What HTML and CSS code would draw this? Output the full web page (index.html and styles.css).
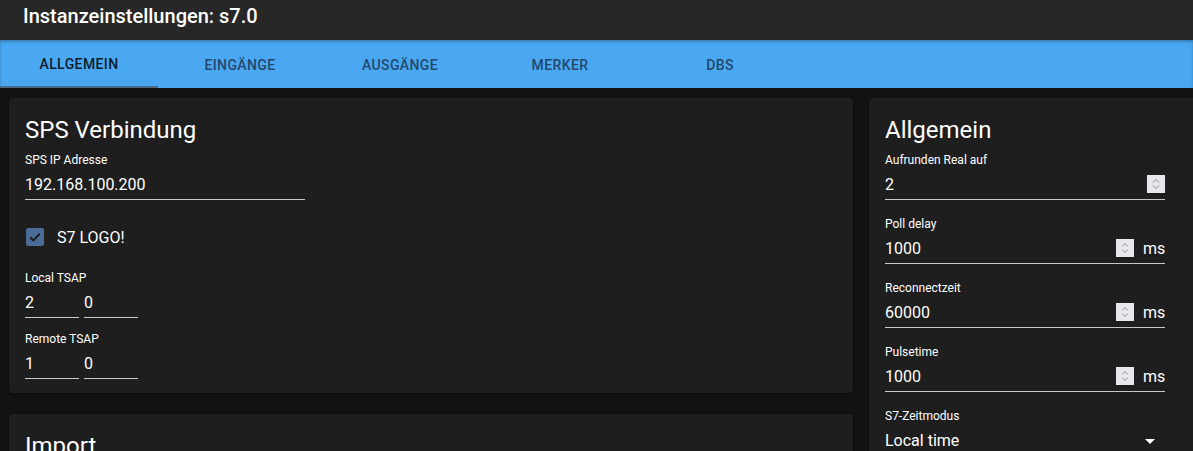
FILE: index.html
```html
<!DOCTYPE html>
<html lang="de">
<head>
    <meta charset="UTF-8">
    <title>Instanzeinstellungen: s7.0</title>
    <link rel="stylesheet" href="styles.css">
</head>
<body>
    <div class="appbar">Instanzeinstellungen: s7.0</div>
    <ul class="tabs">
        <li class="act">ALLGEMEIN</li>
        <li>EINGÄNGE</li>
        <li>AUSGÄNGE</li>
        <li>MERKER</li>
        <li>DBS</li>
    </ul>
    <div class="content">
        <div class="col-left">
            <div class="card">
                <h2>SPS Verbindung</h2>
                <div class="field">
                    <label>SPS IP Adresse</label>
                    <div class="input"><span class="value">192.168.100.200</span></div>
                </div>
                <div class="check">
                    <span class="box">
                        <svg width="18" height="18" viewBox="0 0 18 18"><path d="M4.2 9.2l3.2 3.2 6.4-6.6" fill="none" stroke="#1e1e1e" stroke-width="2"/></svg>
                    </span>
                    <span>S7 LOGO!</span>
                </div>
                <div class="field short">
                    <label>Local TSAP</label>
                    <div class="pair">
                        <div class="input small"><span class="value">2</span></div>
                        <div class="input small"><span class="value">0</span></div>
                    </div>
                </div>
                <div class="field last">
                    <label>Remote TSAP</label>
                    <div class="pair">
                        <div class="input small"><span class="value">1</span></div>
                        <div class="input small"><span class="value">0</span></div>
                    </div>
                </div>
            </div>
            <div class="card">
                <h2>Import</h2>
            </div>
        </div>
        <div class="col-right">
            <div class="card">
                <h2>Allgemein</h2>
                <div class="field">
                    <label>Aufrunden Real auf</label>
                    <div class="input"><span class="value">2</span><span class="spin"><svg width="18" height="18" viewBox="0 0 18 18"><path d="M6 7.5l3-3 3 3M6 10.5l3 3 3-3" fill="none" stroke="#8a8a90" stroke-width="1"/></svg></span></div>
                </div>
                <div class="field">
                    <label>Poll delay</label>
                    <div class="input"><span class="value">1000</span><span class="spin"><svg width="18" height="18" viewBox="0 0 18 18"><path d="M6 7.5l3-3 3 3M6 10.5l3 3 3-3" fill="none" stroke="#8a8a90" stroke-width="1"/></svg></span><span class="unit">ms</span></div>
                </div>
                <div class="field">
                    <label>Reconnectzeit</label>
                    <div class="input"><span class="value">60000</span><span class="spin"><svg width="18" height="18" viewBox="0 0 18 18"><path d="M6 7.5l3-3 3 3M6 10.5l3 3 3-3" fill="none" stroke="#8a8a90" stroke-width="1"/></svg></span><span class="unit">ms</span></div>
                </div>
                <div class="field">
                    <label>Pulsetime</label>
                    <div class="input"><span class="value">1000</span><span class="spin"><svg width="18" height="18" viewBox="0 0 18 18"><path d="M6 7.5l3-3 3 3M6 10.5l3 3 3-3" fill="none" stroke="#8a8a90" stroke-width="1"/></svg></span><span class="unit">ms</span></div>
                </div>
                <div class="field">
                    <label>S7-Zeitmodus</label>
                    <div class="input select"><span class="value">Local time</span><svg class="arrow" width="24" height="24" viewBox="0 0 24 24"><path d="M7 10l5 5 5-5z" fill="#fff"/></svg></div>
                </div>
            </div>
        </div>
    </div>
</body>
</html>
```
FILE: styles.css
```css
html, body{
    margin: 0;
    padding: 0;
}
body{
    background: #121212;
    color: #fff;
    font-family: Roboto, "Liberation Sans", sans-serif;
    overflow: hidden;
    height: 451px;
}
.appbar{
    height: 40px;
    background: #272727;
    font-size: 20px;
    font-weight: 500;
    line-height: 32px;
    padding-left: 23px;
    box-sizing: border-box;
}
.tabs{
    list-style: none;
    margin: 0;
    padding: 0;
    display: flex;
    height: 48px;
    background: #4aa8f2;
    box-shadow: inset 0 2px 3px rgba(0,0,0,.25);
}
.tabs li{
    width: 160px;
    text-align: center;
    line-height: 46px;
    padding-top: 2px;
    font-size: 14px;
    font-weight: 500;
    letter-spacing: .4px;
    color: #23486a;
    box-sizing: border-box;
}
.tabs .act{
    color: #0f1d2b;
    width: 158px;
    margin-right: 2px;
    border-bottom: 2px solid #4b6884;
    line-height: 44px;
}
.content{
    display: flex;
    gap: 16px;
    padding: 10px 0 0 9px;
    width: 1400px;
}
.col-left{
    width: 844px;
    display: flex;
    flex-direction: column;
    gap: 21px;
}
.col-right{
    width: 340px;
}
.card{
    background: #1e1e1e;
    border-radius: 4px;
    padding: 16px 16px 14px;
    box-shadow: 0 1px 3px rgba(0,0,0,.4);
}
h2{
    margin: 0 0 7px;
    font-size: 24px;
    font-weight: 400;
    line-height: 32px;
}
.field{
    margin-bottom: 17px;
}
.field.short{
    margin-bottom: 14px;
}
.field.last{
    margin-bottom: 0;
}
label{
    display: block;
    font-size: 12px;
    line-height: 15px;
}
.input{
    display: flex;
    align-items: center;
    width: 280px;
    height: 32px;
    padding-top: 1px;
    box-sizing: border-box;
    border-bottom: 1px solid #c8c8c8;
    font-size: 16px;
}
.input .value{
    flex: 1;
}
.input.small{
    width: 54px;
}
.pair{
    display: flex;
    gap: 5px;
}
.check{
    display: flex;
    align-items: center;
    height: 40px;
    margin-bottom: 14px;
    font-size: 16px;
}
.check .box{
    width: 18px;
    height: 18px;
    border-radius: 2px;
    background: #4a6c96;
    margin: 0 13px 0 1px;
}
.check .box svg{
    display: block;
}
.spin{
    width: 18px;
    height: 18px;
    background: #e8e8ec;
}
.spin svg{
    display: block;
}
.unit{
    margin-left: 9px;
    width: 22px;
    text-align: right;
}
.select{
    border-bottom: none;
}
.arrow{
    margin-right: 3px;
}
```
